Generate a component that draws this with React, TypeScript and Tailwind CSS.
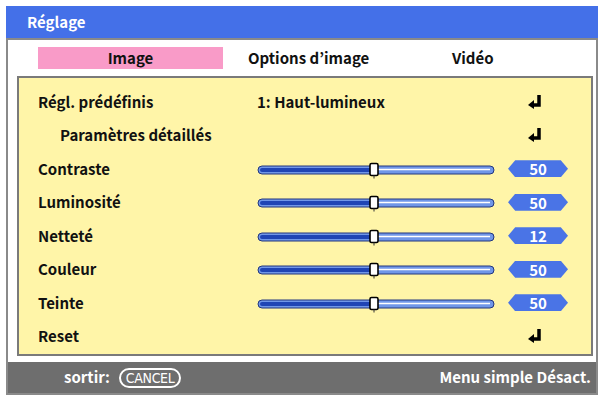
const font = { fontFamily: '"Noto Sans CJK JP", "Noto Sans", sans-serif' }

function Enter() {
  return (
    <svg width="14" height="14" viewBox="0 0 14 14">
      <path d="M11 0 V10 H5" stroke="#000" strokeWidth="3.5" fill="none" />
      <path d="M0 10 L6 5 V14 Z" fill="#000" />
    </svg>
  )
}

function Slider({ pos }: { pos: number }) {
  const w = 238
  const x = Math.round(pos * w)
  return (
    <svg width={w} height="18" viewBox={`0 0 ${w} 18`}>
      <rect x="1" y="5" width={w - 2} height="8" rx="4" fill="#7097e8" stroke="#22367e" strokeWidth="1" />
      <rect x="3" y="7" width={x - 3} height="4" rx="2" fill="#1f45b5" />
      <line x1={x} y1="8.5" x2={w - 5} y2="8.5" stroke="#ffffff" strokeWidth="1.5" />
      <rect x={x - 4} y="2.5" width="8" height="12" rx="1.5" fill="#fff" stroke="#000" strokeWidth="1.6" />
      <line x1={x} y1="14.5" x2={x} y2="17.5" stroke="#333" strokeWidth="1" />
    </svg>
  )
}

function Badge({ v }: { v: string }) {
  return (
    <div className="w-[60px] h-[17px] bg-[#4a74e6] text-white text-[15px] font-bold leading-[17px] text-center [clip-path:polygon(12%_0,88%_0,100%_50%,88%_100%,12%_100%,0_50%)]">
      {v}
    </div>
  )
}

type Row = { label: string; indent?: boolean; value?: string; slider?: string; enter?: boolean }

const rows: Row[] = [
  { label: 'Régl. prédéfinis', value: '1: Haut-lumineux', enter: true },
  { label: 'Paramètres détaillés', indent: true, enter: true },
  { label: 'Contraste', slider: '50' },
  { label: 'Luminosité', slider: '50' },
  { label: 'Netteté', slider: '12' },
  { label: 'Couleur', slider: '50' },
  { label: 'Teinte', slider: '50' },
  { label: 'Reset', enter: true },
]

export default function App() {
  return (
    <div className="bg-white w-[604px] h-[401px] p-[6px]" style={font}>
      <div className="w-[592px] h-[389px] flex flex-col">
        <div className="h-[32px] bg-[#4470e8] text-white text-[15px] font-bold flex items-center pl-[21px]">
          Réglage
        </div>
        <div className="flex-1 bg-white border-x-2 border-t-2 border-[#8a8a8a] flex flex-col">
          <div className="h-[36px] pt-[7px] pl-[30px] flex text-[15px] font-bold text-[#111]">
            <div className="w-[185px] h-[22px] bg-[#f99bc8] flex items-center justify-center">Image</div>
            <div className="w-[229px] h-[22px] flex items-center pl-[25px]">Options d’image</div>
            <div className="h-[22px] flex items-center">Vidéo</div>
          </div>
          <div className="ml-[9px] mr-[3px] h-[280px] bg-[#fff5a8] border-2 border-[#7a7a7a] pt-[7px] text-[15px] font-bold text-[#111]">
            {rows.map((r) => (
              <div key={r.label} className="h-[33.5px] flex items-center">
                <div className={`${r.indent ? 'pl-[41px]' : 'pl-[19px]'} w-[238px]`}>{r.label}</div>
                <div className="w-[251px]">
                  {r.value}
                  {r.slider && <div className="pt-[2px]"><Slider pos={0.49} /></div>}
                </div>
                <div className="w-[70px] flex">
                  {r.slider ? <Badge v={r.slider} /> : r.enter && <div className="pl-[20px]"><Enter /></div>}
                </div>
              </div>
            ))}
          </div>
        </div>
        <div className="h-[33px] bg-[#6e6e6e] border-x-2 border-b-2 border-[#8a8a8a] flex items-center text-white text-[15px] font-bold">
          <span className="pl-[56px]">sortir:</span>
          <span
            className="ml-[9px] h-[20px] px-[5px] rounded-full border-2 border-white text-[14px] font-normal leading-[16px] tracking-tight"
            style={{ fontFamily: '"DejaVu Sans Condensed", "Liberation Sans", sans-serif' }}
          >
            CANCEL
          </span>
          <span className="ml-auto pr-[5px]">Menu simple Désact.</span>
        </div>
      </div>
    </div>
  )
}
